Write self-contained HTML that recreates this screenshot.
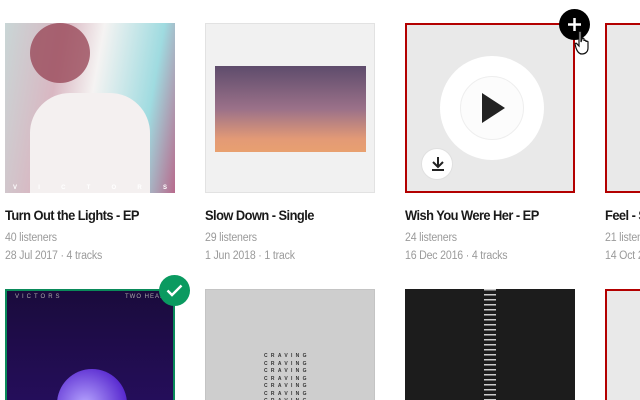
<!DOCTYPE html>
<html><head><style>
*{margin:0;padding:0;box-sizing:border-box}
html,body{width:640px;height:400px;overflow:hidden}
body{background:#fff;font-family:"Liberation Sans",sans-serif;position:relative}
.img{position:absolute;width:170px;height:170px;overflow:hidden}
.t{position:absolute;font-size:14px;font-weight:bold;color:#1a1a1a;letter-spacing:-0.6px;transform:scaleX(0.92);transform-origin:left;white-space:nowrap}
.m{position:absolute;font-size:11.5px;color:#9a9a9a;letter-spacing:-0.2px;transform:scaleX(0.92);transform-origin:left;white-space:nowrap}
.red{border:2px solid #b30000;background:#e9e9e9}
.play{position:absolute;left:33px;top:31px;width:104px;height:104px;border-radius:50%;background:#fff}
.play .in{position:absolute;left:20px;top:20px;width:64px;height:64px;border-radius:50%;border:1px solid #eee;background:#fcfcfc}
</style></head><body>
<div class="img" style="left:5px;top:23px;background:linear-gradient(100deg,#c9d6d6 0%,#d9b7c2 30%,#f5f3f2 50%,#9fdbe0 80%,#b86a8c 100%)">
 <div style="position:absolute;left:25px;top:0;width:60px;height:60px;border-radius:50%;background:#9a4a5a;opacity:.8"></div>
 <div style="position:absolute;left:25px;top:70px;width:120px;height:100px;border-radius:40px 40px 0 0;background:#f4f0f0"></div>
 <div style="position:absolute;left:0;bottom:2px;width:170px;font-size:6px;color:#fff;display:flex;justify-content:space-between;padding:0 8px;font-weight:bold"><span>V</span><span>I</span><span>C</span><span>T</span><span>O</span><span>R</span><span>S</span></div>
</div>
<div class="img" style="left:205px;top:23px;background:#f1f1f1;border:1px solid #e2e2e2">
 <div style="position:absolute;left:9px;top:42px;width:151px;height:86px;background:linear-gradient(180deg,#5e4c6c 0%,#9b7189 50%,#e39a76 85%,#e8a070 100%)"></div>
</div>
<div class="img red" style="left:405px;top:23px">
 <div class="play"><div class="in"></div>
 <svg style="position:absolute;left:42px;top:37px" width="24" height="30" viewBox="0 0 24 30"><path d="M0 0L23 15L0 30Z" fill="#222"/></svg></div>
 <div style="position:absolute;left:14px;top:123px;width:32px;height:32px;border-radius:50%;background:#fff;border:1px solid #e0e0e0">
 <svg style="position:absolute;left:8px;top:7px" width="16" height="16" viewBox="0 0 16 16"><path d="M8 1V11M3 6L8 11L13 6M2 14H14" stroke="#222" stroke-width="2" fill="none"/></svg></div>
</div>
<div class="img red" style="left:605px;top:23px"><div class="play"></div></div>
<div style="position:absolute;left:559px;top:9px;width:31px;height:31px;border-radius:50%;background:#000">
<svg style="position:absolute;left:8px;top:8px" width="15" height="15" viewBox="0 0 15 15"><path d="M7.5 1V14M1 7.5H14" stroke="#fff" stroke-width="2.5"/></svg></div>
<svg style="position:absolute;left:574px;top:30px" width="20" height="26" viewBox="0 0 20 26"><path d="M5 2C5 1 7 1 7 2V12L8 9C8 8 10 8 10 9V11C10 10 12 10 12 11V12C12 11 14 11 14 12V18C14 22 11 24 8 24C5 24 3 21 2 18L1 14C1 13 3 13 3 14L5 16Z" fill="#fff" stroke="#111" stroke-width="1.2"/></svg>
<div class="t" style="left:5px;top:207px">Turn Out the Lights - EP</div>
<div class="t" style="left:205px;top:207px">Slow Down - Single</div>
<div class="t" style="left:405px;top:207px">Wish You Were Her - EP</div>
<div class="t" style="left:605px;top:207px">Feel - Single</div>
<div class="m" style="left:5px;top:232px">40 listeners</div>
<div class="m" style="left:205px;top:232px">29 listeners</div>
<div class="m" style="left:405px;top:232px">24 listeners</div>
<div class="m" style="left:605px;top:232px">21 listeners</div>
<div class="m" style="left:5px;top:250px">28 Jul 2017 · 4 tracks</div>
<div class="m" style="left:205px;top:250px">1 Jun 2018 · 1 track</div>
<div class="m" style="left:405px;top:250px">16 Dec 2016 · 4 tracks</div>
<div class="m" style="left:605px;top:250px">14 Oct 2016 · 1 track</div>
<div class="img" style="left:5px;top:289px;border:2px solid #0a8a5a;background:linear-gradient(180deg,#1a0b3c,#2a0f6a)">
 <div style="position:absolute;left:8px;top:3px;font-size:6px;color:#aaa;letter-spacing:3px;white-space:nowrap">VICTORS</div>
 <div style="position:absolute;left:118px;top:3px;font-size:6px;color:#aaa;letter-spacing:1px;white-space:nowrap">TWO HEARTS</div>
 <div style="position:absolute;left:50px;top:78px;width:70px;height:90px;border-radius:35px 35px 10px 10px;background:radial-gradient(circle at 40% 40%,#b7a6ff,#5a2bd0 60%,#2a0f6a)"></div>
</div>
<div style="position:absolute;left:159px;top:275px;width:31px;height:31px;border-radius:50%;background:#0a9a60">
<svg style="position:absolute;left:7px;top:9px" width="17" height="13" viewBox="0 0 17 13"><path d="M1.5 6.5L6 11L15.5 1.5" stroke="#fff" stroke-width="2.4" fill="none"/></svg></div>
<div class="img" style="left:205px;top:289px;background:#cecece;border:1px solid #c4c4c4">
 <div style="position:absolute;left:58px;top:63px;font-size:5px;font-weight:bold;color:#333;letter-spacing:3.3px;line-height:7.5px">CRAVING<br>CRAVING<br>CRAVING<br>CRAVING<br>CRAVING<br>CRAVING<br>CRAVING</div>
</div>
<div class="img" style="left:405px;top:289px;background:#1c1c1c">
 <div style="position:absolute;left:79px;top:0;width:12px;height:111px;background:repeating-linear-gradient(180deg,#ccc 0 1.5px,transparent 1.5px 5px)"></div>
</div>
<div class="img red" style="left:605px;top:289px"><div class="play"></div></div>
</body></html>
